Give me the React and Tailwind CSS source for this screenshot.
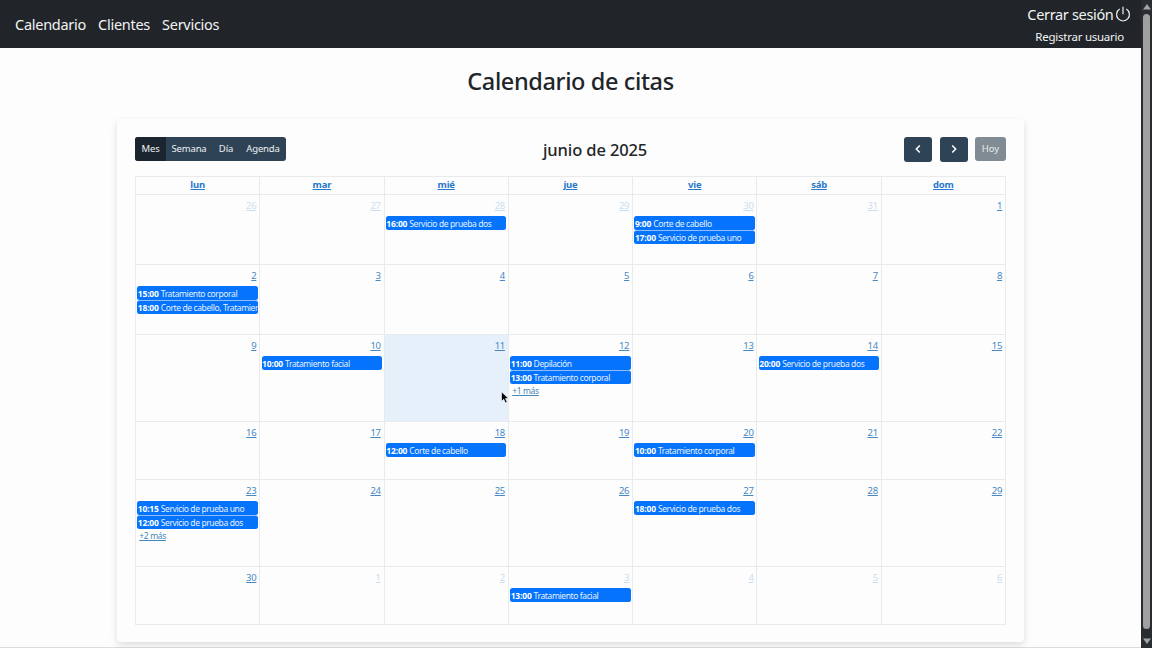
import React from "react";

const days = ["lun", "mar", "mié", "jue", "vie", "sáb", "dom"];

const weeks = [
  {
    height: "h-[70px]",
    days: [26, 27, 28, 29, 30, 31, 1],
    muted: [0, 1, 2, 3, 4, 5],
    events: {
      2: [["16:00", "Servicio de prueba dos"]],
      4: [["9:00", "Corte de cabello"], ["17:00", "Servicio de prueba uno"]],
    },
  },
  {
    height: "h-[70px]",
    days: [2, 3, 4, 5, 6, 7, 8],
    events: { 0: [["15:00", "Tratamiento corporal"], ["18:00", "Corte de cabello, Tratamier"]] },
  },
  {
    height: "h-[87px]",
    days: [9, 10, 11, 12, 13, 14, 15],
    today: 2,
    events: {
      1: [["10:00", "Tratamiento facial"]],
      3: [["11:00", "Depilación"], ["13:00", "Tratamiento corporal"]],
      5: [["20:00", "Servicio de prueba dos"]],
    },
    more: { 3: "+1 más" },
  },
  {
    height: "h-[58px]",
    days: [16, 17, 18, 19, 20, 21, 22],
    events: { 2: [["12:00", "Corte de cabello"]], 4: [["10:00", "Tratamiento corporal"]] },
  },
  {
    height: "h-[87px]",
    days: [23, 24, 25, 26, 27, 28, 29],
    events: {
      0: [["10:15", "Servicio de prueba uno"], ["12:00", "Servicio de prueba dos"]],
      4: [["18:00", "Servicio de prueba dos"]],
    },
    more: { 0: "+2 más" },
  },
  {
    height: "h-[58px]",
    days: [30, 1, 2, 3, 4, 5, 6],
    muted: [1, 2, 3, 4, 5, 6],
    events: { 3: [["13:00", "Tratamiento facial"]] },
  },
];

function Event({ time, title }) {
  return (
    <div className="flex h-[14px] items-center overflow-hidden rounded-[2.5px] border-[#8fbdf6] bg-[#0573fb] pl-[0.5px] text-[8.5px] leading-[13px] whitespace-nowrap text-[#e4f0ff] not-first:border-t">
      <span className="mr-[2px] font-bold tracking-[-0.18px] text-white">{time}</span>
      <span className="tracking-[-0.39px]">{title}</span>
    </div>
  );
}

function DayCell({ day, muted, today, events = [], more }) {
  return (
    <div className={`min-w-0 border-r border-b border-[#e9eaeb] pr-[1.5px] pl-[1.3px] ${today ? "bg-[#e5f0fb]" : ""}`}>
      <div className={`h-[21px] pt-[4px] pr-[1.4px] text-right text-[9.5px] leading-[13px] tracking-[-0.3px] underline ${muted ? "text-[#ccdeef]" : "text-[#4688c4]"}`}>
        {day}
      </div>
      <div className="pb-px">
        {events.map(([time, title]) => (
          <Event key={time} time={time} title={title} />
        ))}
      </div>
      {more && <div className="pl-[2px] text-[8.5px] leading-[12px] tracking-[-0.35px] text-[#4688b8] underline">{more}</div>}
    </div>
  );
}

function Header() {
  return (
    <header className="flex h-12 justify-between bg-[#212529] text-[#f1f3f4]">
      <nav className="flex items-center gap-3 pt-[2px] pl-[15px] text-[14.5px] tracking-[-0.27px]">
        <a>Calendario</a>
        <a>Clientes</a>
        <a>Servicios</a>
      </nav>
      <div className="flex flex-col items-end pt-[4px] pr-[10.5px]">
        <div className="flex h-[22px] items-center gap-px text-[14.5px] tracking-[-0.33px]">
          Cerrar sesión
          <svg viewBox="0 0 16 16" className="size-4 -translate-y-px fill-none stroke-current stroke-[1.2]">
            <path d="M8 .8v7.4M4.7 3.1a6.4 6.4 0 1 0 6.6 0" />
          </svg>
        </div>
        <div className="pr-[6.5px] text-[11.5px] leading-[22px] tracking-[-0.25px]">Registrar usuario</div>
      </div>
    </header>
  );
}

function Toolbar() {
  return (
    <div className="flex h-[26px] items-center justify-between">
      <div className="flex h-6 w-[151px] items-center overflow-hidden rounded-[3px] bg-[#2f4356] text-[9.5px] tracking-[-0.15px] text-[#eef1f3]">
        <span className="flex h-full w-[31px] items-center justify-center bg-[#1a252f]">Mes</span>
        <span className="w-[46px] text-center">Semana</span>
        <span className="w-[28px] text-center">Día</span>
        <span className="w-[46px] text-center">Agenda</span>
      </div>
      <h2 className="pt-[2px] text-[16.5px] font-medium tracking-[-0.12px] text-[#212529]">junio de 2025</h2>
      <div className="flex items-center gap-[7.4px]">
        {["M9.8 4.5 6.3 8l3.5 3.5", "M6.2 4.5 9.7 8l-3.5 3.5"].map((path) => (
          <span key={path} className="flex h-[25px] w-7 items-center justify-center rounded-[3px] bg-[#2f4356]">
            <svg viewBox="0 0 16 16" className="size-4 fill-none stroke-white stroke-[1.5]">
              <path d={path} />
            </svg>
          </span>
        ))}
        <span className="flex h-6 w-[31px] items-center justify-center rounded-[3px] bg-[#808b93] text-[9.5px] text-[#e8ebee]">Hoy</span>
      </div>
    </div>
  );
}

export default function App() {
  return (
    <div className="flex h-[648px] w-[1152px] overflow-hidden bg-[#fdfdfd] font-['Noto_Sans','Open_Sans',sans-serif]">
      <div className="flex w-[1141px] flex-col">
        <Header />
        <main className="flex flex-1 flex-col border-b border-[#dcdcdc]">
          <h1 className="h-[71px] shrink-0 pt-[15px] text-center text-[23.5px] leading-[36px] font-medium tracking-[-0.38px] text-[#212529]">Calendario de citas</h1>
          <section className="ml-[117px] h-[523px] w-[907px] shrink-0 rounded-[4px] bg-[#fdfdfd] px-[18px] pt-[17px] shadow-[0_3px_7px_rgba(0,0,0,0.13)]">
            <Toolbar />
            <div className="mt-[14px] w-[871px] border-t border-l border-[#e9eaeb]">
              <div className="grid h-[18px] grid-cols-7">
                {days.map((day) => (
                  <div key={day} className="border-r border-b border-[#e9eaeb] text-center text-[9.5px] leading-[16px] font-bold tracking-[-0.2px] text-[#2878ce] underline">
                    {day}
                  </div>
                ))}
              </div>
              {weeks.map((week, index) => (
                <div key={index} className={`grid grid-cols-7 ${week.height}`}>
                  {week.days.map((day, column) => (
                    <DayCell
                      key={column}
                      day={day}
                      muted={week.muted?.includes(column)}
                      today={week.today === column}
                      events={week.events[column]}
                      more={week.more?.[column]}
                    />
                  ))}
                </div>
              ))}
            </div>
          </section>
        </main>
      </div>
      <div className="flex w-[11px] flex-col items-center justify-between bg-[#292d31] py-[4px]">
        <svg viewBox="0 0 8 6" className="h-[6px] w-2 fill-[#a4a4a4]"><path d="M4 0 8 5.5H0z" /></svg>
        <div className="mt-[4px] mb-[9px] w-[7px] flex-1 rounded-full bg-[#a0a0a0]" />
        <svg viewBox="0 0 8 6" className="h-[6px] w-2 fill-[#a4a4a4]"><path d="M0 .5h8L4 6z" /></svg>
      </div>
      <svg viewBox="0 0 12 19" className="absolute top-[391px] left-[500.5px] h-[13px] w-2">
        <path d="M.7 1v14.3l3.4-3.2 2.4 5.5 2.7-1.2-2.4-5.3h4.5z" className="fill-black stroke-white stroke-1" />
      </svg>
    </div>
  );
}
